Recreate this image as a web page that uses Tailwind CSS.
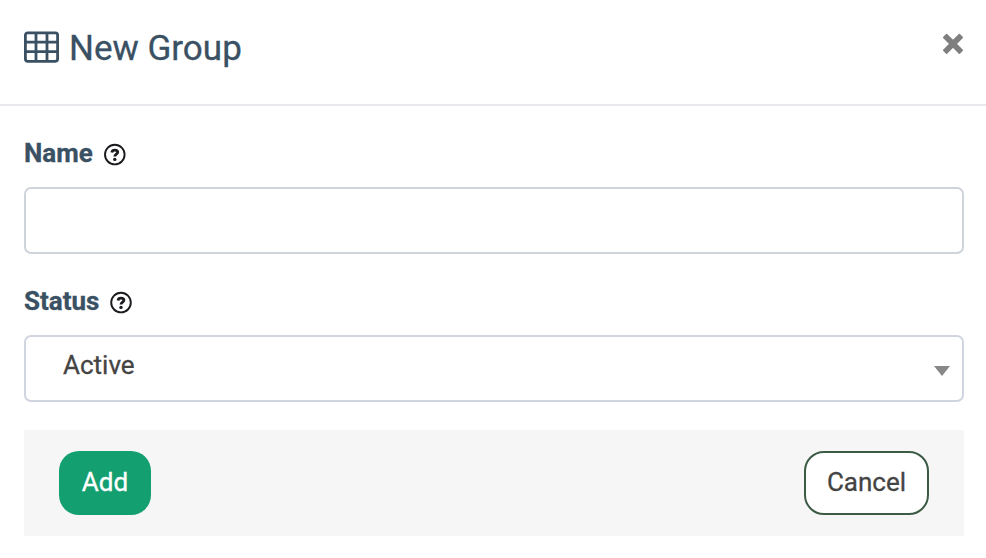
<!DOCTYPE html>
<html lang="en">
<head>
<meta charset="utf-8">
<title>New Group</title>
<script src="https://cdn.jsdelivr.net/npm/@tailwindcss/browser@4"></script>
</head>
<body class="h-[558px] overflow-hidden bg-white font-[Roboto,sans-serif] text-[26px] text-[#444] [-webkit-text-stroke:0.3px]">
<header class="flex h-[106px] items-start justify-between border-b-2 border-[#e7e9ed] pl-6 pr-[22px]">
  <h1 class="flex items-start text-[35px] leading-[42px] text-[#3a5063]">
    <svg class="mt-[31px] h-8 w-[35px]" viewBox="0 0 35 32" fill="none" stroke="currentColor" stroke-width="2.8">
      <rect x="1.4" y="1.9" width="32.2" height="28.4" rx="2.2"/>
      <path d="M1.4 11.2H33.6M1.4 20.7H33.6M12 1.9V30.3M23 1.9V30.3"/>
    </svg>
    <span class="ml-[10px] mt-[28px]">New Group</span>
  </h1>
  <button class="mt-[33px]" aria-label="Close">
    <svg class="h-[22px] w-[22px]" viewBox="0 0 22 22" fill="#7f7f7f" stroke="#7f7f7f" stroke-width="1.6" stroke-linejoin="round">
      <path d="M4.6 1.6L11 7.9L17.4 1.6L20.3 4.5L13.9 10.9L20.3 17.3L17.4 20.2L11 13.8L4.6 20.2L1.7 17.3L8.1 10.9L1.7 4.5Z"/>
    </svg>
  </button>
</header>
<main class="px-6 pr-[22px]">
  <div class="flex h-[81px] items-start pt-[32px]">
    <label for="name" class="text-[26px] leading-[30px] font-bold text-[#3a5063]">Name</label>
    <svg class="ml-[10px] mt-[5px] h-6 w-6" viewBox="0 0 24 24" fill="none" stroke="#1b1b1f">
      <circle cx="11.8" cy="11.6" r="9.8" stroke-width="1.9"/>
      <path d="M8.8 9.4Q9.2 7.2 11.8 7.2Q14.7 7.2 14.7 9.3C14.7 11.2 11.8 11.2 11.8 13.5" stroke-width="2.8"/>
      <circle cx="11.8" cy="16.4" r="1.7" fill="#1b1b1f" stroke="none"/>
    </svg>
  </div>
  <input id="name" type="text" class="block h-[67px] w-full rounded-[7px] border-2 border-[#ced4da] px-6">
  <div class="flex h-[81px] items-start pt-[32px]">
    <span class="text-[26px] leading-[30px] font-bold text-[#3a5063]">Status</span>
    <svg class="ml-[10px] mt-[5px] h-6 w-6" viewBox="0 0 24 24" fill="none" stroke="#1b1b1f">
      <circle cx="12" cy="11.6" r="9.8" stroke-width="1.9"/>
      <path d="M9 9.4Q9.4 7.2 12 7.2Q14.9 7.2 14.9 9.3C14.9 11.2 12 11.2 12 13.5" stroke-width="2.8"/>
      <circle cx="12" cy="16.4" r="1.7" fill="#1b1b1f" stroke="none"/>
    </svg>
  </div>
  <div class="flex h-[67px] items-start justify-between rounded-[7px] border-2 border-[#d1d5e0] pl-[37px] pr-[12px]">
    <span class="mt-[13px] leading-[30px]">Active</span>
    <svg class="mt-[29px] h-[10px] w-4" viewBox="0 0 16 10" fill="#888"><path d="M0 0H16L8 10Z"/></svg>
  </div>
  <footer class="mt-7 flex h-[106px] items-start justify-between bg-[#f6f6f6] px-[35px] pt-[21px]">
    <button class="h-16 w-[92px] rounded-[20px] bg-[#149f71] pb-[2px] text-white">Add</button>
    <button class="h-16 w-[125px] rounded-[20px] border-2 border-[#3b5b45] bg-white pb-[2px]">Cancel</button>
  </footer>
</main>
</body>
</html>
